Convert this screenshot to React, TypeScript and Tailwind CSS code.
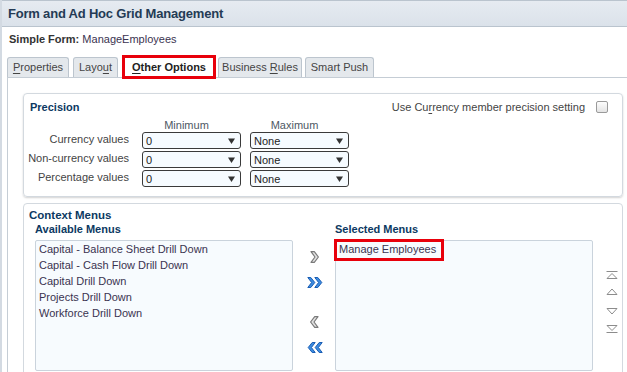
const font = { fontFamily: '"Liberation Sans", Arial, sans-serif' };

const tabs = [
  { label: 'Properties', key: 'P', w: 'w-[62px]', ml: '' },
  { label: 'Layout', key: 'u', w: 'w-[45px]', ml: 'ml-[4px]' },
];

function AccessLabel({ text, letter }: { text: string; letter: string }) {
  const i = text.indexOf(letter);
  if (i < 0) return <span>{text}</span>;
  return (
    <span className="whitespace-pre">
      {text.slice(0, i)}
      <span className="underline underline-offset-[2px]">{letter}</span>
      {text.slice(i + 1)}
    </span>
  );
}

function Tab({ label, accessKey, className }: { label: string; accessKey?: string; className: string }) {
  return (
    <div className={`flex h-[20px] items-center justify-center rounded-t-[3px] border border-b-0 border-[#bcc5ce] bg-[#e4e8ec] text-[11px] text-[#444] ${className}`}>
      {accessKey ? <AccessLabel text={label} letter={accessKey} /> : label}
    </div>
  );
}

function Select({ value }: { value: string }) {
  return (
    <div className="flex h-[17px] items-center justify-between rounded-[3px] border border-[#3a3a3a] bg-[#f6fbff] pl-[3px] pr-[5px] text-[11px] leading-none text-[#222]">
      <span className="pt-[2px]">{value}</span>
      <svg width="7" height="6" viewBox="0 0 7 6">
        <path d="M0 0.5 H7 L3.5 6 Z" fill="#333" />
      </svg>
    </div>
  );
}

function Chevron({ dir, blue }: { dir: 'right' | 'left'; blue?: boolean }) {
  const single = 'M1 0.7 H4.3 L8.4 6 L4.3 11.3 H1 L5 6 Z';
  const flip = dir === 'left' ? 'scale(-1,1) translate(-9,0)' : undefined;
  if (!blue) {
    return (
      <svg width="9" height="12" viewBox="0 0 9 12">
        <g transform={flip}>
          <path d={single} fill="#e2e2e2" stroke="#7a7a7a" strokeWidth="1.2" strokeLinejoin="round" />
        </g>
      </svg>
    );
  }
  const dbl = 'M0.8 0.5 H3.8 L7.8 5.5 L3.8 10.5 H0.8 L4.6 5.5 Z';
  const flip2 = dir === 'left' ? 'scale(-1,1) translate(-16,0)' : undefined;
  return (
    <svg width="16" height="11" viewBox="0 0 16 11">
      <g transform={flip2}>
        <path d={dbl} fill="#3d8ce0" stroke="#1a5db3" strokeWidth="1" strokeLinejoin="round" />
        <path d={dbl} transform="translate(7,0)" fill="#3d8ce0" stroke="#1a5db3" strokeWidth="1" strokeLinejoin="round" />
      </g>
    </svg>
  );
}

function MoveIcon({ kind }: { kind: 'top' | 'up' | 'down' | 'bottom' }) {
  const c = '#8c8c8c';
  if (kind === 'top')
    return (
      <svg width="12" height="8" viewBox="0 0 12 8">
        <path d="M0.5 0.5 H11.5" stroke={c} />
        <path d="M1 7.5 L6 2.5 L11 7.5 Z" fill="none" stroke={c} />
      </svg>
    );
  if (kind === 'up')
    return (
      <svg width="12" height="7" viewBox="0 0 12 7">
        <path d="M1 6.5 L6 1 L11 6.5 Z" fill="none" stroke={c} />
      </svg>
    );
  if (kind === 'down')
    return (
      <svg width="12" height="7" viewBox="0 0 12 7">
        <path d="M1 0.5 L6 6 L11 0.5 Z" fill="none" stroke={c} />
      </svg>
    );
  return (
    <svg width="12" height="8" viewBox="0 0 12 8">
      <path d="M1 0.5 L6 5.5 L11 0.5 Z" fill="none" stroke={c} />
      <path d="M0.5 7.5 H11.5" stroke={c} />
    </svg>
  );
}

const precisionRows = ['Currency values', 'Non-currency values', 'Percentage values'];
const availableMenus = [
  'Capital - Balance Sheet Drill Down',
  'Capital - Cash Flow Drill Down',
  'Capital Drill Down',
  'Projects Drill Down',
  'Workforce Drill Down',
];

export default function App() {
  return (
    <div style={font} className="min-h-[372px] w-[627px] overflow-hidden border-l-2 border-[#d3dae2] bg-white">
      <div className="flex h-[27px] items-center border-y border-[#bac4ce] bg-gradient-to-b from-[#e6ebf1] to-[#dbe2ea] pl-[6px]">
        <span className="text-[13px] font-bold tracking-[-0.2px] text-[#243b55]">Form and Ad Hoc Grid Management</span>
      </div>

      <div className="mt-[5px] pl-[7px] text-[11px] leading-[14px] text-[#333]">
        <span className="font-bold">Simple Form:</span> <span className="text-[#3a3350]">ManageEmployees</span>
      </div>

      <div className="relative z-10 ml-[5px] mt-[9px] flex items-end">
        {tabs.map((t) => (
          <Tab key={t.label} label={t.label} accessKey={t.key} className={`${t.w} ${t.ml}`} />
        ))}
        <div className="-mb-[2px] ml-[4px] flex h-[24px] w-[94px] items-center justify-center border-[3px] border-[#e8000b] bg-white text-[11px] font-bold text-[#222]">
          <AccessLabel text="Other Options" letter="O" />
        </div>
        <Tab label="Business Rules" accessKey="R" className="ml-[2px] w-[84px]" />
        <Tab label="Smart Push" className="ml-[3px] w-[69px]" />
      </div>

      <div className="ml-[5px] border-l border-t border-[#c5cdd5] pb-[20px] pl-[15px] pr-[4px] pt-[15px]">
        <section className="h-[104px] rounded-[4px] border border-[#d3d9df] shadow-[0_1px_2px_rgba(0,0,0,0.18)]">
          <div className="flex items-center justify-between pl-[6px] pr-[14px] pt-[6px] leading-[14px]">
            <span className="text-[11px] font-bold text-[#0c3962]">Precision</span>
            <div className="flex items-center gap-[11px] text-[11px] text-[#444]">
              <span>
                Use Cu<span className="underline underline-offset-[2px]">r</span>rency member precision setting
              </span>
              <span className="h-[12px] w-[12px] rounded-[2px] border border-[#9a9a9a] bg-gradient-to-b from-[#fdfdfd] to-[#e4e4e4]" />
            </div>
          </div>
          <div className="mt-[4px] grid grid-cols-[105px_112px_108px] gap-y-[2px] text-[11px] leading-[14px]">
            <div className="h-[12px]" />
            <div className="ml-[13px] h-[12px] pr-[10px] text-center text-[#4e5864]">Minimum</div>
            <div className="ml-[9px] h-[12px] pr-[10px] text-center text-[#4e5864]">Maximum</div>
            {precisionRows.map((label) => (
              <div key={label} className="contents">
                <div className="text-right text-[#444]">{label}</div>
                <div className="ml-[13px]">
                  <Select value="0" />
                </div>
                <div className="ml-[9px]">
                  <Select value="None" />
                </div>
              </div>
            ))}
          </div>
        </section>

        <section className="mt-[6px] rounded-[4px] border border-[#d3d9df] pb-[10px] pt-[4px]">
          <div className="pl-[5px] text-[11.5px] font-bold leading-[14px] text-[#0c3962]">Context Menus</div>
          <div className="flex pl-[11px]">
            <div className="w-[258px]">
              <div className="text-[11px] font-bold leading-[14px] text-[#0c3962]">Available Menus</div>
              <ul className="mt-[4px] h-[131px] rounded-[2px] border border-[#cad3dc] bg-[#f7fbfe] pl-[3px] text-[11px] leading-[16px] text-[#3a3350]">
                {availableMenus.map((m) => (
                  <li key={m}>{m}</li>
                ))}
              </ul>
            </div>
            <div className="mt-[18px] flex w-[42px] flex-col items-center pl-[1px]">
              <div className="mt-[11px]">
                <Chevron dir="right" />
              </div>
              <div className="mt-[14px]">
                <Chevron dir="right" blue />
              </div>
              <div className="mt-[28px]">
                <Chevron dir="left" />
              </div>
              <div className="mt-[14px]">
                <Chevron dir="left" blue />
              </div>
            </div>
            <div className="w-[258px]">
              <div className="text-[11px] font-bold leading-[14px] text-[#0c3962]">Selected Menus</div>
              <ul className="relative mt-[4px] h-[131px] rounded-[2px] border border-[#cad3dc] bg-[#f7fbfe] pl-[3px] text-[11px] leading-[16px] text-[#3a3350]">
                <li>Manage Employees</li>
                <span className="absolute -left-[2px] -top-[2px] h-[22px] w-[110px] border-[3px] border-[#e8000b]" />
              </ul>
            </div>
            <div className="mt-[18px] flex flex-col pl-[13px]">
              <div className="mt-[31px]">
                <MoveIcon kind="top" />
              </div>
              <div className="mt-[9px]">
                <MoveIcon kind="up" />
              </div>
              <div className="mt-[13px]">
                <MoveIcon kind="down" />
              </div>
              <div className="mt-[10px]">
                <MoveIcon kind="bottom" />
              </div>
            </div>
          </div>
        </section>
      </div>
    </div>
  );
}
